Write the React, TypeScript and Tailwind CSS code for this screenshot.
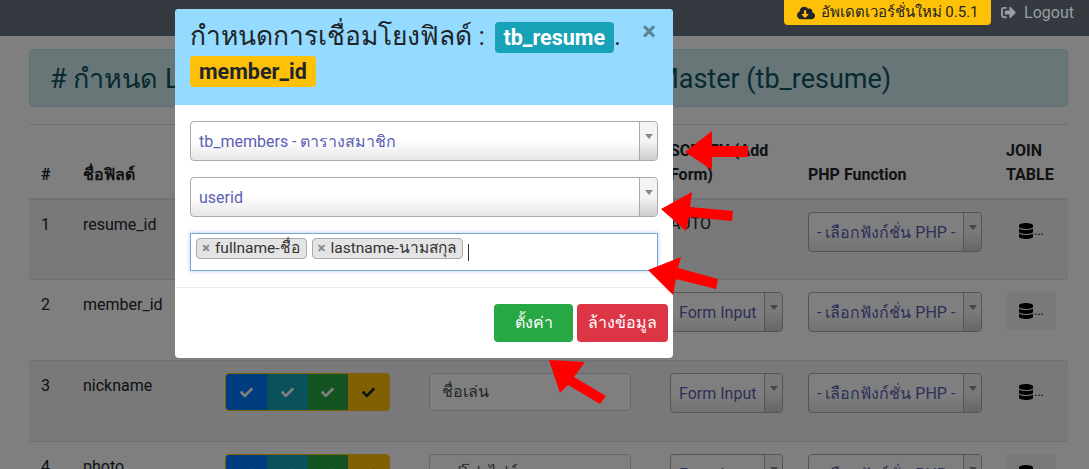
import React from 'react';
import { FaCheck, FaCloudDownloadAlt, FaDatabase, FaSignOutAlt } from 'react-icons/fa';

const rows = [
  { id: 1, name: 'resume_id', auto: true, input: '' },
  { id: 2, name: 'member_id', auto: false, input: 'รหัสสมาชิก' },
  { id: 3, name: 'nickname', auto: false, input: 'ชื่อเล่น' },
  { id: 4, name: 'photo', auto: false, input: 'รูปโปรไฟล์' },
];

// select2 style dropdown, used in the table and in the modal
const Select = ({ label, className }: { label: string; className: string }) => (
  <div className={`flex h-10 rounded border border-[#aaa] bg-gradient-to-b from-white from-50% to-[#e6e6e6] text-[#5a60b4] ${className}`}>
    <span className="flex-1 truncate pl-2 pr-1 leading-[39px]">{label}</span>
    <span className="flex w-[18px] shrink-0 justify-center rounded-r border-l border-[#aaa] bg-gradient-to-b from-[#f4f4f4] from-50% to-[#ccc] pt-[12px]">
      <span className="h-0 w-0 border-x-4 border-t-[5px] border-x-transparent border-t-[#888]" />
    </span>
  </div>
);

const Tag = ({ label }: { label: string }) => (
  <span className="flex h-[21px] items-center gap-[5px] rounded border border-[#aaa] bg-[#e4e4e4] pl-[5px] pr-1.5 text-[15.5px] leading-none text-[#333]">
    <span className="text-[15px] font-bold text-[#888]">×</span>
    {label}
  </span>
);

const Toggles = () => (
  <div className="flex h-[38px] w-[165px] overflow-hidden rounded border border-[#ffc107] text-[13px] text-white">
    <span className="flex flex-1 items-center justify-center bg-[#007bff]"><FaCheck /></span>
    <span className="flex flex-1 items-center justify-center bg-[#17a2b8]"><FaCheck /></span>
    <span className="flex flex-1 items-center justify-center bg-[#28a745]"><FaCheck /></span>
    <span className="flex flex-1 items-center justify-center bg-[#ffc107] text-[#212529]"><FaCheck /></span>
  </div>
);

export default function App() {
  return (
    <div className="relative h-[469px] w-[1089px] overflow-hidden bg-white font-['Roboto','Noto_Sans',sans-serif] text-base text-[#212529]">
      <div className="relative z-20 flex h-9 items-start justify-end bg-[#343a40] pr-[15px]">
        <button className="flex h-[25px] w-[207px] items-center justify-center gap-1.5 rounded-b bg-[#ffc107] text-[15px] text-[#212529]">
          <FaCloudDownloadAlt className="text-lg" />
          อัพเดตเวอร์ชั่นใหม่ 0.5.1
        </button>
        <a className="ml-[10px] flex h-[25px] items-center gap-2 text-[#999ea3]">
          <FaSignOutAlt className="text-[15px]" />
          Logout
        </a>
      </div>

      <div className="pl-[29px] pr-[21px] pt-[13px]">
        <div className="mb-[17px] h-[58px] whitespace-nowrap rounded border border-[#bee5eb] bg-[#d1ecf1] px-5 text-[27px] leading-[58px] text-[#0c5460]">
          # กำหนด Layout การแสดงผลฟอร์มข้อมูลของตาราง <span className="-ml-[7px]">Master (tb_resume)</span>
        </div>
        <table className="w-full table-fixed border-t border-[#dee2e6]">
          <colgroup>
            <col className="w-[42px]" />
            <col className="w-[142px]" />
            <col className="w-[204px]" />
            <col className="w-[241px]" />
            <col className="w-[138px]" />
            <col className="w-[198px]" />
            <col className="w-[74px]" />
          </colgroup>
          <thead>
            <tr className="h-[74px] border-b-2 border-[#dee2e6] text-left align-bottom font-bold">
              <th className="px-3 pb-[11px]">#</th>
              <th className="px-3 pb-[11px]">ชื่อฟิลด์</th>
              <th className="px-3 pb-[11px]">แสดงผล</th>
              <th className="px-3 pb-[11px]">ชื่อที่แสดง</th>
              <th className="px-3 pb-[11px]">SCREEN (Add Form)</th>
              <th className="px-3 pb-[11px]">PHP Function</th>
              <th className="px-3 pb-[11px]">JOIN TABLE</th>
            </tr>
          </thead>
          <tbody>
            {rows.map(r => (
              <tr key={r.id} className={`h-[81px] border-t border-[#dee2e6] align-top ${r.id % 2 ? 'bg-black/5' : ''}`}>
                <td className="px-3 pt-[13px]">{r.id}</td>
                <td className="px-3 pt-[13px]">{r.name}</td>
                <td className="p-3"><Toggles /></td>
                <td className="p-3">
                  <div className="h-[38px] w-[202px] rounded border border-[#ced4da] bg-white px-3 leading-9 text-[#495057]">{r.input}</div>
                </td>
                <td className="p-3">
                  {r.auto ? 'AUTO' : <Select label="Form Input" className="w-[113px]" />}
                </td>
                <td className="p-3"><Select label="- เลือกฟังก์ชั่น PHP -" className="w-[174px]" /></td>
                <td className="p-3">
                  <div className={`flex h-[38px] w-[50px] items-center justify-center rounded text-black ${r.id % 2 ? '' : 'bg-black/5'}`}>
                    <FaDatabase className="text-base" />
                    <span className="text-xs leading-[20px]">...</span>
                  </div>
                </td>
              </tr>
            ))}
          </tbody>
        </table>
      </div>

      <div className="absolute inset-0 z-10 bg-black/50" />

      <div className="absolute left-[175px] top-[9px] z-30 h-[349px] w-[498px] overflow-hidden rounded bg-white">
        <div className="relative h-24 bg-[#94dbff] pl-[15px] pr-[40px] pt-[11px] text-[26.4px] leading-[33px]">
          กำหนดการเชื่อมโยงฟิลด์ :{' '}
          <span className="ml-[3px] rounded bg-[#17a2b8] px-[9px] py-[3px] text-[21.5px] font-bold text-white">tb_resume</span>.{' '}
          <span className="rounded bg-[#ffc107] px-[9px] py-[3px] text-[21.5px] font-bold">member_id</span>
          <span className="absolute right-[17px] top-[6px] text-[26px] font-bold text-[#5d8296]">×</span>
        </div>
        <div className="flex h-[183px] flex-col gap-4 border-b border-[#e9ecef] px-[15px] pt-4">
          <Select label="tb_members - ตารางสมาชิก" className="w-[468px]" />
          <Select label="userid" className="w-[468px]" />
          <div className="flex h-[38px] w-[468px] items-start gap-[5px] border border-[#7aa3d6] pl-[5px] pt-1 shadow-[0_0_4px_rgba(82,136,210,0.45)]">
            <Tag label="fullname-ชื่อ" />
            <Tag label="lastname-นามสกุล" />
            <span className="mt-[6px] h-[17px] w-px bg-[#333]" />
          </div>
        </div>
        <div className="flex justify-end gap-1 pr-[5px] pt-4 text-white">
          <button className="h-[38px] w-[79px] rounded bg-[#28a745]">ตั้งค่า</button>
          <button className="h-[38px] w-[91px] rounded bg-[#dc3545]">ล้างข้อมูล</button>
        </div>
      </div>

      <svg className="pointer-events-none absolute left-0 top-0 z-40" width="1089" height="469" fill="#ff0000">
        <polygon points="685,152 712,131 712,146 748,146 748,157 712,157 712,170" />
        <polygon points="661,209 692,192 690,207 733,211 732,221 689,217 686,231" />
        <polygon points="648,270 681,257 678,268 718,279 716,289 676,279 673,295" />
        <polygon points="549,360 585,362 574,377 606,396 600,404 568,385 560,393" />
      </svg>
    </div>
  );
}
